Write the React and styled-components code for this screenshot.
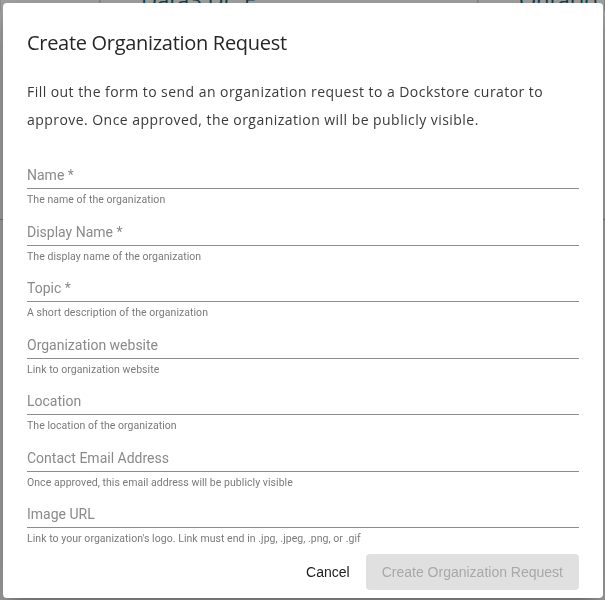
import React from "react";
import { styled, createGlobalStyle } from "styled-components";

const GlobalStyle = createGlobalStyle`
  html, body {
    margin: 0;
    padding: 0;
    background: #ffffff;
    overflow: hidden;
  }
  * {
    box-sizing: border-box;
  }
`;

const fields = [
  { label: "Name *", hint: "The name of the organization" },
  { label: "Display Name *", hint: "The display name of the organization" },
  { label: "Topic *", hint: "A short description of the organization" },
  { label: "Organization website", hint: "Link to organization website" },
  { label: "Location", hint: "The location of the organization" },
  {
    label: "Contact Email Address",
    hint: "Once approved, this email address will be publicly visible",
  },
  {
    label: "Image URL",
    hint: "Link to your organization's logo. Link must end in .jpg, .jpeg, .png, or .gif",
  },
];

const App = () => {
  return (
    <>
      <GlobalStyle />
      <Page>
        <HeaderRow>
          <Cell width="100px" />
          <Cell width="378px">Data3 Dr. E</Cell>
          <Cell width="127px">Ontario</Cell>
        </HeaderRow>
        <BodyRow />
      </Page>
      <Backdrop />
      <Dialog>
        <Title>Create Organization Request</Title>
        <Description>
          Fill out the form to send an organization request to a Dockstore
          curator to approve. Once approved, the organization will be publicly
          visible.
        </Description>
        <Form>
          {fields.map((f) => (
            <Field key={f.label}>
              <InputBox>
                <Label>{f.label}</Label>
              </InputBox>
              <Hint>{f.hint}</Hint>
            </Field>
          ))}
        </Form>
        <Actions>
          <TextButton>Cancel</TextButton>
          <FlatButton disabled>Create Organization Request</FlatButton>
        </Actions>
      </Dialog>
    </>
  );
};

export default App;

const Page = styled.div`
  width: 605px;
  height: 600px;
  margin-top: -13px;
  font-family: "Open Sans", sans-serif;
`;

const HeaderRow = styled.div`
  display: flex;
  height: 24px;
`;

const Cell = styled.div`
  width: ${(props) => props.width};
  padding-left: 40px;
  border-right: 1px solid #cfcfcf;
  border-left: 1px solid #e6e6e6;
  color: #14676e;
  font-size: 22px;
  line-height: 24px;
  white-space: nowrap;
  overflow: hidden;
`;

const BodyRow = styled.div`
  height: 209px;
  border-bottom: 1px solid #bdbdbd;
`;

const Backdrop = styled.div`
  position: fixed;
  inset: 0;
  background: rgba(0, 0, 0, 0.36);
`;

const Dialog = styled.div`
  position: fixed;
  left: 3px;
  top: 3px;
  width: 600px;
  background: #ffffff;
  border-radius: 4px;
  padding: 24px 24px 8px;
  display: flex;
  flex-direction: column;
  box-shadow: 0 11px 15px -7px rgba(0, 0, 0, 0.2),
    0 24px 38px 3px rgba(0, 0, 0, 0.14), 0 9px 46px 8px rgba(0, 0, 0, 0.12);
`;

const Title = styled.h2`
  margin: 0;
  font-family: "Open Sans", "Liberation Sans", sans-serif;
  font-size: 20px;
  font-weight: 400;
  letter-spacing: -0.3px;
  line-height: 32px;
  color: #262626;
`;

const Description = styled.p`
  margin: 19px 0 0;
  font-family: "Open Sans", "Liberation Sans", sans-serif;
  font-size: 14px;
  letter-spacing: 0.45px;
  line-height: 28px;
  color: #3a3a3a;
`;

const Form = styled.div`
  margin-top: 32px;
  display: flex;
  flex-direction: column;
  gap: 16.5px;
`;

const Field = styled.div`
  display: flex;
  flex-direction: column;
`;

const InputBox = styled.div`
  height: 23px;
  padding-bottom: 4px;
  border-bottom: 1px solid #8c8c8c;
`;

const Label = styled.div`
  font-family: Roboto, "Liberation Sans", sans-serif;
  font-size: 14px;
  line-height: 18px;
  color: #8a8a8a;
`;

const Hint = styled.div`
  margin-top: 5px;
  font-family: Roboto, "Liberation Sans", sans-serif;
  font-size: 10.5px;
  letter-spacing: 0.05px;
  line-height: 12px;
  color: #7a7a7a;
`;

const Actions = styled.div`
  margin-top: 9px;
  display: flex;
  justify-content: flex-end;
  gap: 8px;
`;

const TextButton = styled.button`
  height: 36px;
  min-width: 64px;
  padding: 0 8px 0 16px;
  border: none;
  border-radius: 4px;
  background: transparent;
  font-family: "Liberation Sans", Arial, sans-serif;
  font-size: 14px;
  color: #212121;
  cursor: pointer;
`;

const FlatButton = styled.button`
  height: 36px;
  padding: 0 16px;
  border: none;
  border-radius: 4px;
  background: #e0e0e0;
  font-family: "Liberation Sans", Arial, sans-serif;
  font-size: 14px;
  color: #a8a8a8;
`;
